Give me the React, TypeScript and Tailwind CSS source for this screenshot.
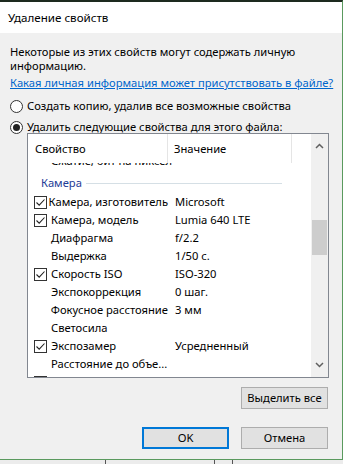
import React from "react";

type Row = {
  name: string;
  value?: string;
  checked?: boolean;
  box?: boolean;
};

const rows: Row[] = [
  { name: "Камера, изготовитель", value: "Microsoft", checked: true, box: true },
  { name: "Камера, модель", value: "Lumia 640 LTE", checked: true, box: true },
  { name: "Диафрагма", value: "f/2.2" },
  { name: "Выдержка", value: "1/50 с." },
  { name: "Скорость ISO", value: "ISO-320", checked: true, box: true },
  { name: "Экспокоррекция", value: "0 шаг." },
  { name: "Фокусное расстояние", value: "3 мм" },
  { name: "Светосила" },
  { name: "Экспозамер", value: "Усредненный", checked: true, box: true },
  { name: "Расстояние до объе..." },
];

const Checkbox = ({ checked }: { checked?: boolean }) => (
  <div className="flex size-[13px] shrink-0 items-center justify-center border border-[#333] bg-white">
    {checked && (
      <svg width="11" height="11" viewBox="0 0 11 11">
        <path d="M1.5 5.5 L4.2 8.2 L9.5 2.5" fill="none" stroke="#222" strokeWidth="1.1" />
      </svg>
    )}
  </div>
);

const Radio = ({ checked }: { checked?: boolean }) => (
  <div className="flex size-[13px] shrink-0 items-center justify-center rounded-full border border-[#333] bg-white">
    {checked && <div className="size-[7px] rounded-full bg-[#222]" />}
  </div>
);

const PropertyRow = ({ name, value, checked, box }: Row) => (
  <div className="flex h-[18px] items-center">
    <div className="flex w-[140px] items-center pl-[6px]">
      <div className="w-[17px]">{box && <Checkbox checked={checked} />}</div>
      <span className="whitespace-nowrap">{name}</span>
    </div>
    <span className="pl-[7px] whitespace-nowrap">{value}</span>
  </div>
);

const Button = ({ label, primary }: { label: string; primary?: boolean }) => (
  <div
    className={
      primary
        ? "flex h-[22px] w-[87px] items-center justify-center border-2 border-[#0078d7] bg-[#e1e1e1]"
        : "flex h-[22px] w-[87px] items-center justify-center border border-[#adadad] bg-[#e1e1e1]"
    }
  >
    {label}
  </div>
);

export default function App() {
  return (
    <div
      className="flex h-[464px] w-[343px] flex-col overflow-hidden bg-[#6b6b6b] text-[11.2px] leading-[14px] text-black"
      style={{ fontFamily: '"Noto Sans", "Liberation Sans", sans-serif' }}
    >
      <div className="flex h-[460px] shrink-0 flex-col border-t-2 border-r border-b border-t-[#1d2a1f] border-r-[#5a9a5e] border-b-[#5a9a5e] bg-[#f0f0f0]">
        <div className="flex h-[31px] shrink-0 items-center bg-white pl-[8px] text-[11.6px]">Удаление свойств</div>

        <div className="flex h-[100px] shrink-0 flex-col px-[10px] pt-[12px]">
          <p>
            Некоторые из этих свойств могут содержать личную
            <br />
            информацию.
          </p>
          <p className="mt-[3px] whitespace-nowrap text-[#0066cc] underline">
            Какая личная информация может присутствовать в файле?
          </p>

          <div className="mt-[9px] flex items-center gap-[4px]">
            <Radio />
            <span>Создать копию, удалив все возможные свойства</span>
          </div>
          <div className="mt-[7px] flex items-center gap-[4px]">
            <Radio checked />
            <span>Удалить следующие свойства для этого файла:</span>
          </div>
        </div>

        <div className="ml-[27px] flex h-[245px] w-[302px] shrink-0 border border-[#828790] bg-white">
          <div className="flex flex-1 flex-col overflow-hidden">
            <div className="flex h-[29px] shrink-0 items-stretch">
              <div className="flex w-[140px] items-center border-r border-[#e5e5e5] pl-[7px]">Свойство</div>
              <div className="flex w-[124px] items-center border-r border-[#e5e5e5] pl-[6px]">Значение</div>
            </div>
            <div className="flex-1 overflow-hidden">
              <div className="-mt-[11px]">
                <div className="flex h-[18px] items-center pl-[23px] whitespace-nowrap">Сжатие, бит на пиксел</div>
                <div className="flex h-[23px] items-center gap-[4px] pl-[13px] pt-[3px] text-[#1e3c96]">
                  <span>Камера</span>
                  <div className="h-px w-[196px] bg-[#d5dfe5]" />
                </div>
                {rows.map((r) => (
                  <PropertyRow key={r.name} {...r} />
                ))}
                <div className="flex h-[18px] items-center pl-[6px]">
                  <Checkbox />
                </div>
              </div>
            </div>
          </div>
          <div className="flex w-[17px] flex-col items-center bg-[#f0f0f0]">
            <svg className="mt-[9px]" width="9" height="6" viewBox="0 0 9 6">
              <path d="M1 5 L4.5 1.5 L8 5" fill="none" stroke="#606060" strokeWidth="1.5" />
            </svg>
            <div className="mt-[71px] h-[35px] w-[15px] bg-[#cdcdcd]" />
            <div className="flex-1" />
            <svg className="mb-[9px]" width="9" height="6" viewBox="0 0 9 6">
              <path d="M1 1 L4.5 4.5 L8 1" fill="none" stroke="#606060" strokeWidth="1.5" />
            </svg>
          </div>
        </div>

        <div className="mt-[9px] flex justify-end pr-[14px]">
          <Button label="Выделить все" />
        </div>

        <div className="mt-[18px] flex justify-end gap-[12px] pr-[14px]">
          <Button label="OK" primary />
          <Button label="Отмена" />
        </div>
      </div>
      <div className="flex h-[4px] bg-[#ececec]">
        <div className="ml-[105px] w-px bg-[#555]" />
        <div className="ml-[108px] w-px bg-[#555]" />
        <div className="ml-[17px] w-px bg-[#555]" />
      </div>
    </div>
  );
}
